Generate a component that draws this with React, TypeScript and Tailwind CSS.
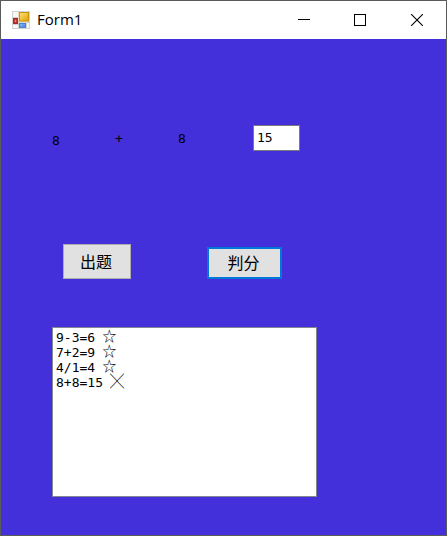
import React, { useState } from "react";

const history = [
  { text: "9-3=6", mark: "☆" },
  { text: "7+2=9", mark: "☆" },
  { text: "4/1=4", mark: "☆" },
  { text: "8+8=15", mark: "╳" },
];

const FormIcon = () => (
  <svg viewBox="0 0 18 18" className="h-[18px] w-[18px]" aria-hidden="true">
    <defs>
      <linearGradient id="gold" x1="0" y1="0" x2="1" y2="1">
        <stop offset="0" stopColor="#ffe27a" />
        <stop offset="1" stopColor="#dfa000" />
      </linearGradient>
      <linearGradient id="azure" x1="0" y1="0" x2="1" y2="1">
        <stop offset="0" stopColor="#8fc0f5" />
        <stop offset="1" stopColor="#3f7fd8" />
      </linearGradient>
    </defs>
    <rect width="18" height="18" fill="#d2d2d2" />
    <path d="M1 1h5v5H1zM1 14h5v3H1zM15 12h2v5h-2z" fill="#f6f6f6" />
    <rect x="6" y="1" width="11" height="10" fill="#e9dfc0" />
    <rect x="7.5" y="1.5" width="9" height="8.5" fill="url(#gold)" stroke="#c99310" />
    <rect x="1.5" y="7.5" width="4" height="5" fill="#c43b34" stroke="#a12a26" />
    <rect x="3" y="9" width="1" height="2" fill="#e88a80" />
    <rect x="7.5" y="12.5" width="6" height="4" fill="url(#azure)" stroke="#4b83cf" />
  </svg>
);

const TitleBar = () => (
  <header className="flex h-[38px] items-center bg-white pl-[11px]">
    <FormIcon />
    <h1 className="ml-[7px] flex-1 pb-[2px] font-['Open_Sans','Noto_Sans',sans-serif] text-[15px] leading-5 text-black">
      Form1
    </h1>
    <button type="button" aria-label="Minimize" className="flex h-full w-14 items-center justify-center">
      <svg viewBox="0 0 12 12" className="h-3 w-3" shapeRendering="crispEdges">
        <path d="M0 5.5h12" stroke="#000" />
      </svg>
    </button>
    <button type="button" aria-label="Maximize" className="flex h-full w-14 items-center justify-center">
      <svg viewBox="0 0 12 12" className="h-3 w-3" shapeRendering="crispEdges">
        <path d="M.5 .5h11v11H.5z" fill="none" stroke="#000" />
      </svg>
    </button>
    <button type="button" aria-label="Close" className="flex h-full w-[58px] items-center justify-center">
      <svg viewBox="0 0 12 12" className="h-3 w-3">
        <path d="M0 0l12 12M12 0L0 12" stroke="#000" strokeWidth="1.1" />
      </svg>
    </button>
  </header>
);

const App = () => {
  const [answer, setAnswer] = useState("15");

  return (
    <div className="flex min-h-screen flex-col border border-[#5a5a5a] bg-[#4430da] font-['DejaVu_Sans_Mono','Noto_Sans_CJK_SC',monospace] text-[13px] leading-[15px] text-black">
      <TitleBar />
      <main className="flex-1 pt-[86px] pl-[51px]">
        <div className="flex h-[26px] items-start">
          <span className="w-[63px] pt-2">8</span>
          <span className="w-[63px] pt-[6px]">+</span>
          <label htmlFor="answer" className="w-[75px] pt-[6px]">
            8
          </label>
          <input
            id="answer"
            value={answer}
            onChange={(e) => setAnswer(e.target.value)}
            className="h-[26px] w-[47px] rounded-none border border-[#7a7a7a] bg-white px-[3px] pb-[2px] outline-none"
          />
        </div>
        <div className="mt-[93px] flex items-end pl-[11px] font-['Noto_Sans_CJK_SC',sans-serif] text-base leading-5">
          <button
            type="button"
            className="h-[35px] w-[68px] border border-[#adadad] bg-[#e1e1e1] pr-[2px] pb-[2px]"
          >
            出题
          </button>
          <button
            type="button"
            className="ml-[76px] h-8 w-[75px] border-2 border-[#0078d7] bg-[#e1e1e1] pr-[2px] pb-[2px]"
          >
            判分
          </button>
        </div>
        <ul className="mt-12 h-[170px] w-[265px] border border-[#828790] bg-white px-[3px] py-[2px]">
          {history.map(({ text, mark }) => (
            <li key={text} className="flex h-[15px] items-center gap-[7px]">
              <span>{text}</span>
              <span className="font-['Liberation_Mono','Noto_Sans_CJK_SC',monospace] text-sm leading-[15px]">
                {mark}
              </span>
            </li>
          ))}
        </ul>
      </main>
    </div>
  );
};

export default App;
